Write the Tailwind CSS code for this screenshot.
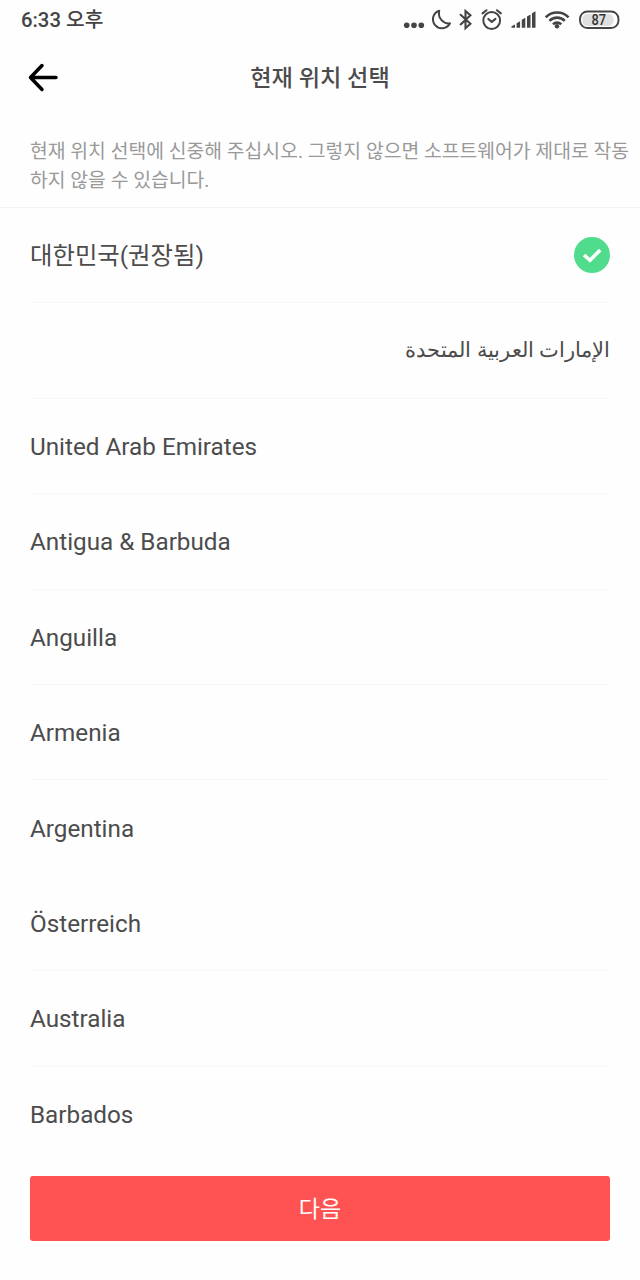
<!DOCTYPE html>
<html lang="ko">
<head>
  <meta charset="UTF-8" />
  <meta name="viewport" content="width=device-width, initial-scale=1.0" />
  <title>현재 위치 선택</title>
  <script src="https://cdn.jsdelivr.net/npm/@tailwindcss/browser@4"></script>
</head>
<body class="bg-[#fefefe] text-[#4c4c4c] font-[Roboto,'Noto_Sans_CJK_KR',sans-serif]">
  <div class="w-[640px] h-[1280px] flex flex-col overflow-hidden">
    <!-- Status bar -->
    <div class="h-10 shrink-0 pl-[21px] flex items-center justify-between text-[#444444]">
      <span class="text-[20.3px] leading-10 font-medium">6:33 오후</span>
      <svg class="w-[240px] h-10" viewBox="400 0 240 40" fill="none" stroke="#444444" stroke-width="1.8" stroke-linecap="round" stroke-linejoin="round">
        <g fill="#444444" stroke="none">
          <circle cx="406.7" cy="25.2" r="2.8" />
          <circle cx="414" cy="25.2" r="2.8" />
          <circle cx="421.3" cy="25.2" r="2.8" />
        </g>
        <path d="M439.2 10.7a9 9 0 1 0 10.8 12.6C443.500 24.200 437.500 18 439.200 10.700Z" stroke-width="2" />
        <path d="M460.6 14.8 470.4 23.8 465.5 28.2V11L470.4 15.3 460.6 24.4" stroke-width="2.1" stroke-linejoin="miter" />
        <circle cx="491.7" cy="20.5" r="8.4" stroke-width="2" />
        <path d="m488.3 18.9 3.5 3 3.7-3M482.5 13.4l4-3.2M500.900 13.400l-4-3.200" stroke-width="2" />
        <g stroke="none" fill="#444444">
          <path d="M511.5 27.7v-1.500l3.500-1.800v3.300Z" />
          <path d="M516.6 27.7v-4.500l3.500-1.900v6.400Z" />
          <path d="M521.8 27.7v-8l3.500-2v10Z" />
          <path d="M527 27.7v-11.200l3.500-2v13.200Z" />
          <path d="M532 27.7V13.200l3.500-2v16.500Z" />
          <circle cx="557" cy="26.2" r="2.2" />
        </g>
        <g stroke-width="2.6" stroke-linecap="butt">
          <path d="M545.7 17.3a16 16 0 0 1 22.900 0" />
          <path d="M549.4 20.900a10.800 10.800 0 0 1 15.400 0" />
          <path d="M553 24.400a5.700 5.700 0 0 1 8.200 0" />
        </g>
        <rect x="582.5" y="14" width="31" height="12" rx="5" fill="#dfdfdf" stroke="none" />
        <rect x="580" y="11.5" width="38.5" height="16.500" rx="7.500" stroke-width="1.900" />
        <text x="598.7" y="25" text-anchor="middle" textLength="14.500" lengthAdjust="spacingAndGlyphs" fill="#333333" stroke="none" class="text-[14.5px] font-medium">87</text>
      </svg>
    </div>

    <!-- Header -->
    <header class="h-[75px] shrink-0 px-7 grid grid-cols-[30px_1fr_30px] items-center">
      <button aria-label="뒤로">
        <svg class="w-[30px] h-[30px]" viewBox="0 0 30 30" fill="none" stroke="#000000" stroke-width="3.5" stroke-linecap="round" stroke-linejoin="round">
          <path d="M14 2.500 2.500 14.500 14 26.500M2.500 14.500H28" />
        </svg>
      </button>
      <h1 class="pt-px text-center text-[23.2px] font-medium">현재 위치 선택</h1>
    </header>

    <p class="h-[93px] shrink-0 pl-[30px] pt-[22px] border-b border-[#f2f2f2] text-[19.32px] leading-[29px] text-[#999999] whitespace-nowrap">현재 위치 선택에 신중해 주십시오. 그렇지 않으면 소프트웨어가 제대로 작동<br />하지 않을 수 있습니다.</p>

    <!-- Country list -->
    <ul class="px-[30px] text-[24.25px] leading-[36px]">
      <li class="h-[95.4px] flex items-center justify-between border-b border-[#f8f8f8]">
        <span class="pt-0.5 text-[24.4px]">대한민국(권장됨)</span>
        <svg class="w-9 h-9" viewBox="0 0 36 36" fill="none">
          <circle cx="18" cy="18" r="18" fill="#50dc8c" />
          <path d="m10 18 6 5.3 10.2-10.3" stroke="#ffffff" stroke-width="3.5" />
        </svg>
      </li>
      <li dir="rtl" lang="ar" class="h-[95.4px] pb-[3px] flex items-center border-b border-[#f8f8f8] text-[21.1px] font-['Noto_Sans',sans-serif]">الإمارات العربية المتحدة</li>
      <li class="h-[95.4px] pt-0.5 flex items-center border-b border-[#f8f8f8]">United Arab Emirates</li>
      <li class="h-[95.4px] pt-0.5 flex items-center border-b border-[#f8f8f8]">Antigua &amp; Barbuda</li>
      <li class="h-[95.4px] pt-0.5 flex items-center border-b border-[#f8f8f8]">Anguilla</li>
      <li class="h-[95.4px] pt-0.5 flex items-center border-b border-[#f8f8f8]">Armenia</li>
      <li class="h-[95.4px] pt-0.5 flex items-center">Argentina</li>
      <li class="h-[95.4px] pt-0.5 flex items-center border-b border-[#f8f8f8]">Österreich</li>
      <li class="h-[95.4px] pt-0.5 flex items-center border-b border-[#f8f8f8]">Australia</li>
      <li class="h-[95.4px] pt-0.5 flex items-center">Barbados</li>
    </ul>

    <button class="mt-[14px] mx-[30px] h-[65px] pt-1 shrink-0 rounded-[3px] bg-[#ff5353] text-white text-[23px]">다음</button>
  </div>
</body>
</html>
